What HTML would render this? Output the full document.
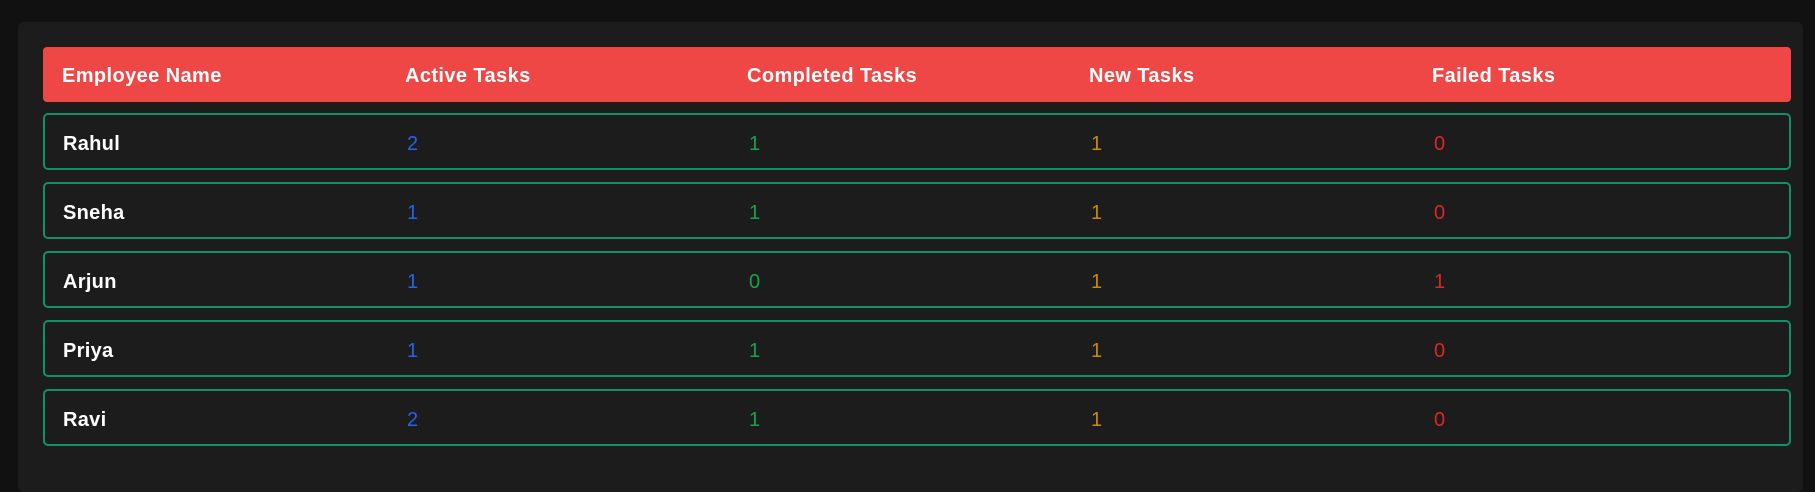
<!DOCTYPE html>
<html><head><style>
html,body{margin:0;padding:0;background:#111;width:1815px;height:466px;overflow:hidden;font-family:"Liberation Sans",sans-serif;}
.panel{position:absolute;left:18px;top:22px;width:1785px;height:470px;background:#1c1c1c;border-radius:6px;}
.hdr,.row{position:absolute;left:43px;width:1748px;box-sizing:border-box;}
.hdr{top:47px;height:55px;background:#ef4646;border-radius:4px;color:#fff;font-weight:bold;font-size:20px;letter-spacing:0.4px;}
.row{height:57px;border:2px solid #0e9068;border-radius:5px;font-size:20px;}
.c{position:absolute;line-height:20px;}
.hdr .c{top:19px}
.row .c{top:19px}
.c1{left:19px}.c2{left:362px}.c3{left:704px}.c4{left:1046px}.c5{left:1389px}
.row .c1{color:#fff;font-weight:bold;left:18px;letter-spacing:0.3px}
.b{color:#2563eb}.g{color:#16a34a}.y{color:#ca8a04}.r{color:#dc2626}
</style></head><body>
<div class="panel"></div>
<div class="hdr"><span class="c c1">Employee Name</span><span class="c c2">Active Tasks</span><span class="c c3">Completed Tasks</span><span class="c c4">New Tasks</span><span class="c c5">Failed Tasks</span></div>
<div class="row" style="top:113px"><span class="c c1">Rahul</span><span class="c c2 b">2</span><span class="c c3 g">1</span><span class="c c4 y">1</span><span class="c c5 r">0</span></div>
<div class="row" style="top:182px"><span class="c c1">Sneha</span><span class="c c2 b">1</span><span class="c c3 g">1</span><span class="c c4 y">1</span><span class="c c5 r">0</span></div>
<div class="row" style="top:251px"><span class="c c1">Arjun</span><span class="c c2 b">1</span><span class="c c3 g">0</span><span class="c c4 y">1</span><span class="c c5 r">1</span></div>
<div class="row" style="top:320px"><span class="c c1">Priya</span><span class="c c2 b">1</span><span class="c c3 g">1</span><span class="c c4 y">1</span><span class="c c5 r">0</span></div>
<div class="row" style="top:389px"><span class="c c1">Ravi</span><span class="c c2 b">2</span><span class="c c3 g">1</span><span class="c c4 y">1</span><span class="c c5 r">0</span></div>
</body></html>
